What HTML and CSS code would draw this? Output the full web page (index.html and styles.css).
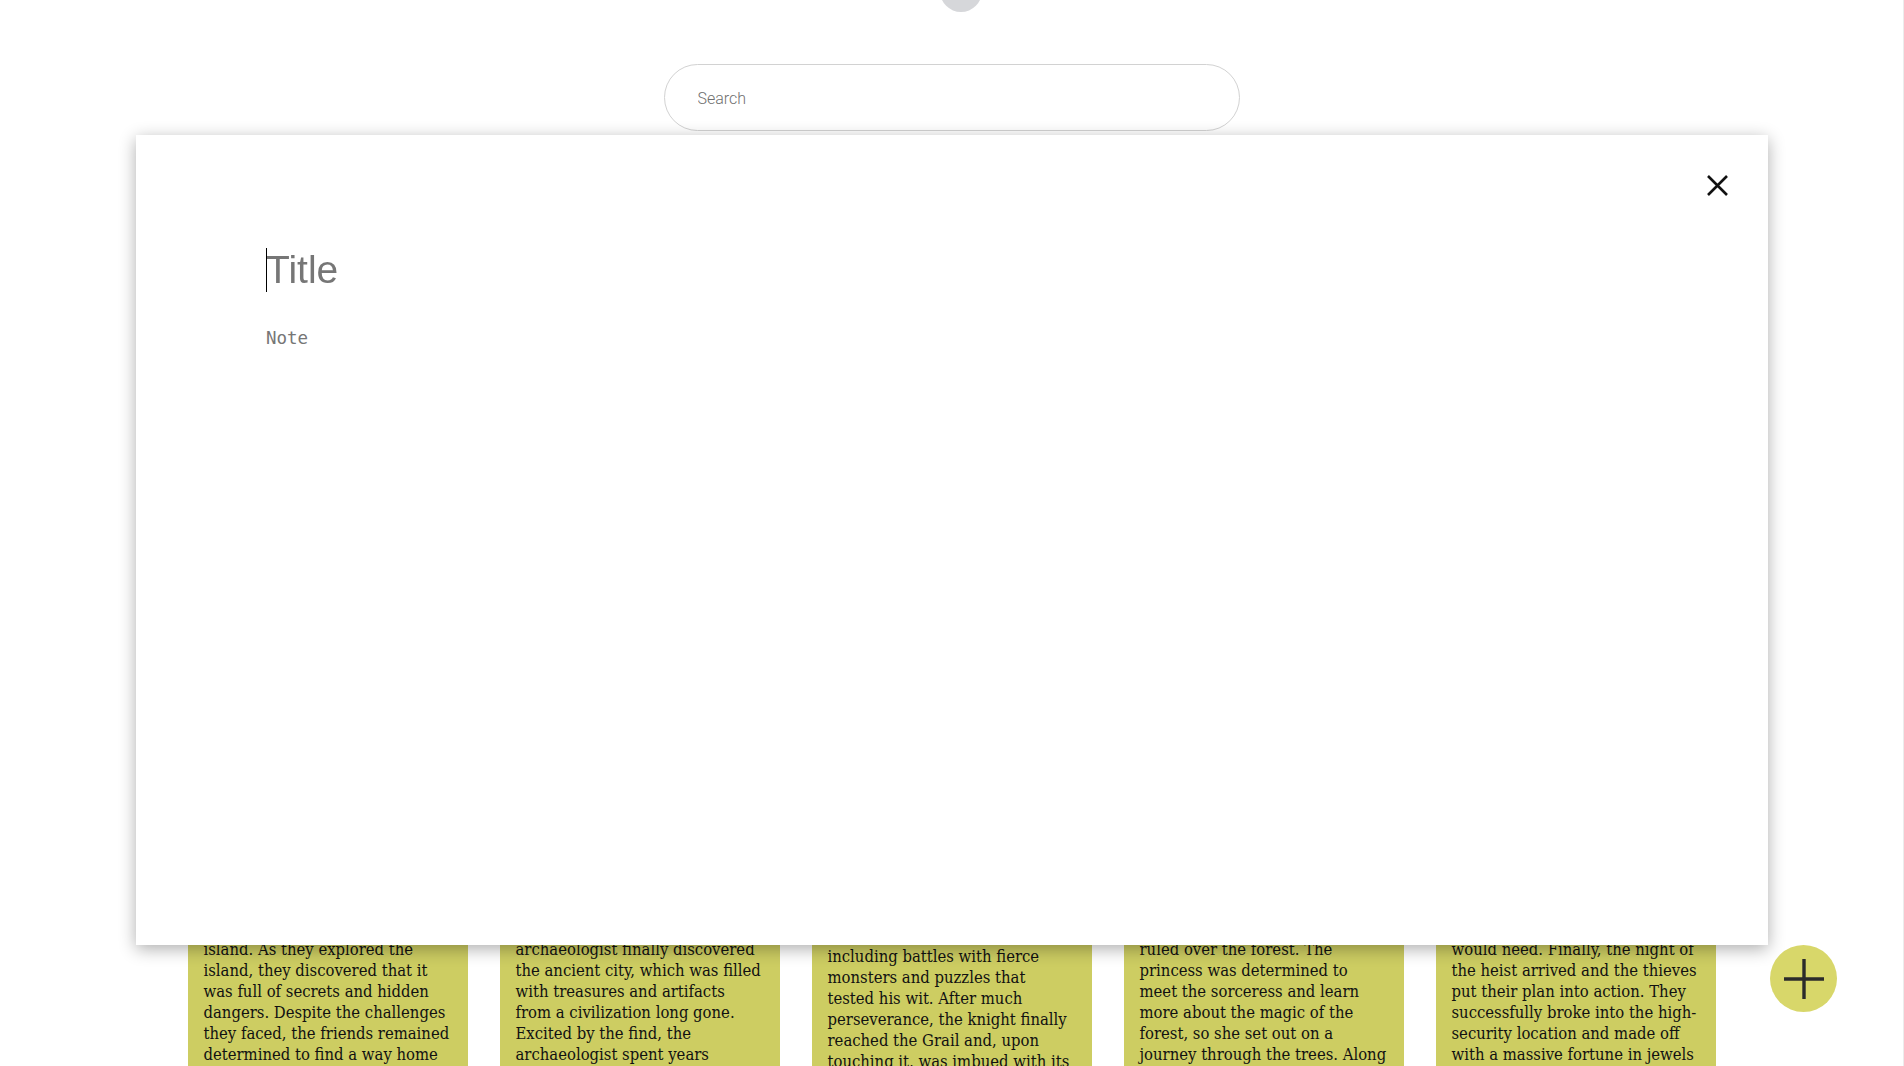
FILE: index.html
```html
<!DOCTYPE html>
<html lang="en">
<head>
<meta charset="utf-8">
<title>Notes</title>
<link rel="stylesheet" href="styles.css">
</head>
<body>
<div class="app">
  <header class="header">
    <div class="logo"></div>
    <div class="search">
      <input class="search-input" type="text" placeholder="Search">
    </div>
  </header>

  <main class="notes">
    <article class="card">
      <p class="card-text">A group of friends set sail and<br>were shipwrecked on a deserted<br>island. As they explored the<br>island, they discovered that it<br>was full of secrets and hidden<br>dangers. Despite the challenges<br>they faced, the friends remained<br>determined to find a way home<br>and never gave up hope.</p>
    </article>
    <article class="card">
      <p class="card-text">After years of searching, the<br>determined and tireless<br>archaeologist finally discovered<br>the ancient city, which was filled<br>with treasures and artifacts<br>from a civilization long gone.<br>Excited by the find, the<br>archaeologist spent years<br>studying its ruins.</p>
    </article>
    <article class="card">
      <p class="card-text">The knight set out to find the<br>Holy Grail and faced many trials.</p>
      <p class="card-text">including battles with fierce<br>monsters and puzzles that<br>tested his wit. After much<br>perseverance, the knight finally<br>reached the Grail and, upon<br>touching it, was imbued with its<br>power.</p>
    </article>
    <article class="card">
      <p class="card-text">Deep in the woods lived a<br>powerful sorceress who<br>ruled over the forest. The<br>princess was determined to<br>meet the sorceress and learn<br>more about the magic of the<br>forest, so she set out on a<br>journey through the trees. Along<br>the way she made new friends.</p>
    </article>
    <article class="card">
      <p class="card-text">The thieves spent weeks planning<br>and gathering every tool they<br>would need. Finally, the night of<br>the heist arrived and the thieves<br>put their plan into action. They<br>successfully broke into the high-<br>security location and made off<br>with a massive fortune in jewels<br>and gold.</p>
    </article>
  </main>
</div>

<div class="modal">
  <button class="modal-close" type="button" aria-label="Close">
    <svg width="21" height="21" viewBox="0 0 21 21"><path d="M1 1 L20 20 M20 1 L1 20" stroke="#111" stroke-width="2.6" fill="none"/></svg>
  </button>
  <div class="modal-body">
    <div class="title-field">
      <input class="note-title" type="text" placeholder="Title">
    </div>
    <textarea class="note-text" placeholder="Note"></textarea>
  </div>
</div>

<button class="fab" type="button" aria-label="Add note">
  <svg width="40" height="40" viewBox="0 0 40 40"><path d="M0 20 H40 M20 0 V40" stroke="#2b2b2b" stroke-width="3.4" fill="none"/></svg>
</button>
</body>
</html>
```

FILE: styles.css
```css
html, body {
  margin: 0;
  padding: 0;
  background: #ffffff;
  overflow: hidden;
}

body {
  font-family: Roboto, "Liberation Sans", sans-serif;
  border-right: 1px solid #ececec;
  height: 1066px;
  box-sizing: border-box;
}

.app {
  display: flex;
  flex-direction: column;
}

.header {
  display: flex;
  flex-direction: column;
  align-items: center;
}

.logo {
  width: 42px;
  height: 42px;
  border-radius: 50%;
  background: #d6d7da;
  margin-top: -30px;
  margin-left: 18px;
}

.search {
  margin-top: 52px;
  width: 576px;
  height: 67px;
  box-sizing: border-box;
  border: 1px solid #d2d2d2;
  border-radius: 34px;
  display: flex;
  align-items: center;
  padding: 2px 32px 0 33px;
}

.search-input {
  border: none;
  outline: none;
  width: 100%;
  font-family: Roboto, "Liberation Sans", sans-serif;
  font-weight: 300;
  font-size: 16px;
  color: #333;
  background: transparent;
  padding: 0;
}

.search-input::placeholder {
  color: #707070;
}

.notes {
  display: grid;
  grid-template-columns: repeat(5, 280px);
  column-gap: 32px;
  justify-content: center;
  align-items: start;
  margin-top: 750px;
}

.card {
  background: #cdcd62;
  padding: 16px;
}

.card-text {
  margin: 0;
  font-family: "DejaVu Serif Condensed", "DejaVu Serif", serif;
  font-stretch: condensed;
  font-size: 16.5px;
  line-height: 21px;
  color: #111;
  white-space: nowrap;
}

.card-text + .card-text {
  margin-top: 7px;
}

.modal {
  position: fixed;
  top: 135px;
  left: 0;
  right: 0;
  margin: 0 auto;
  width: 1632px;
  height: 810px;
  background: #ffffff;
  box-shadow: 0 4px 16px rgba(0, 0, 0, 0.32);
  box-sizing: border-box;
  padding: 113px 130px 0;
}

.modal-close {
  position: absolute;
  top: 40px;
  right: 40px;
  width: 21px;
  height: 21px;
  padding: 0;
  border: none;
  background: transparent;
  display: flex;
}

.modal-body {
  display: flex;
  flex-direction: column;
}

.title-field {
  position: relative;
  display: flex;
}

.title-field::before {
  content: "";
  position: absolute;
  left: 0;
  top: 0;
  width: 1px;
  height: 44px;
  background: #000;
}

.note-title {
  border: none;
  outline: none;
  padding: 0;
  height: 44px;
  width: 100%;
  font-family: "Liberation Sans", Arial, sans-serif;
  font-size: 39px;
  color: #333;
  background: transparent;
}

.note-title::placeholder {
  color: #767676;
}

.note-text {
  margin-top: 36px;
  border: none;
  outline: none;
  resize: none;
  padding: 0;
  height: 300px;
  font-family: "DejaVu Sans Mono", monospace;
  font-size: 17.5px;
  color: #333;
}

.note-text::placeholder {
  color: #767676;
}

.fab {
  position: fixed;
  left: 1770px;
  top: 945px;
  width: 67px;
  height: 67px;
  border-radius: 50%;
  border: none;
  padding: 0;
  background: #d8d76a;
  display: flex;
  align-items: center;
  justify-content: center;
}
```
